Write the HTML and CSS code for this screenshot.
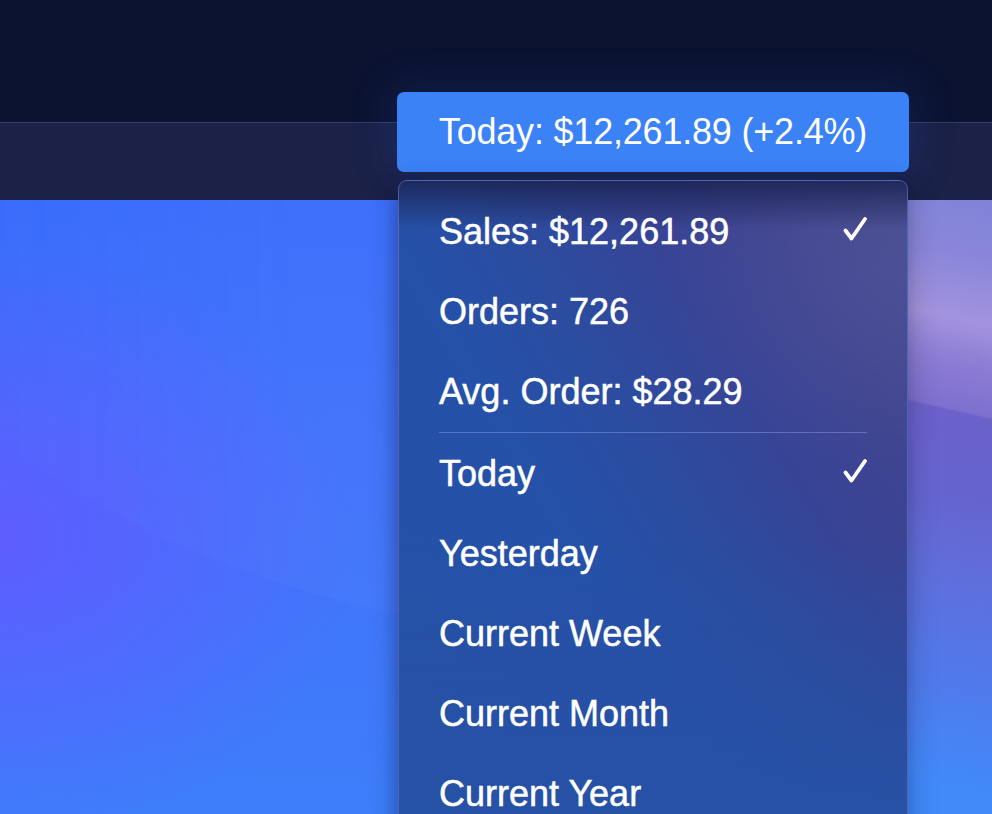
FILE: index.html
```html
<!DOCTYPE html>
<html lang="en">
	<head>
		<meta charset="utf-8">
		<title>Sales menu</title>
		<meta name="viewport" content="width=device-width">
		<link rel="stylesheet" href="styles.css">
	</head>
	<body>
		<div id="screen">
			<div class="topbar"></div>
			<div class="menubar"></div>
			<div class="desktop">
				<div class="wave"></div>
			</div>

			<!-- status item + dropdown -->
			<div class="status">
				<div class="status-button">Today: $12,261.89 (+2.4%)</div>
				<ul class="menu">
					<li class="item"><span>Sales: $12,261.89</span>
						<svg class="check" viewBox="0 0 24 24"><polyline points="2.5,13.5 8.5,21.5 22,2"/></svg>
					</li>
					<li class="item"><span>Orders: 726</span></li>
					<li class="item"><span>Avg. Order: $28.29</span></li>
					<li class="sep"></li>
					<li class="item"><span>Today</span>
						<svg class="check" viewBox="0 0 24 24"><polyline points="2.5,13.5 8.5,21.5 22,2"/></svg>
					</li>
					<li class="item"><span>Yesterday</span></li>
					<li class="item"><span>Current Week</span></li>
					<li class="item"><span>Current Month</span></li>
					<li class="item"><span>Current Year</span></li>
				</ul>
			</div>
		</div>
	</body>
</html>
```
FILE: styles.css
```css
* {
	margin: 0px;
	padding: 0px;
	box-sizing: border-box;
}

body {
	width: 992px;
	height: 814px;
	overflow: hidden;
	font-family: "Liberation Sans", Arial, sans-serif;
	background-color: rgb(12, 19, 49);
}

#screen {
	position: relative;
	width: 992px;
	height: 814px;
	display: flex;
	flex-direction: column;
	overflow: hidden;
}

.topbar {
	height: 122px;
	background-color: rgb(12, 19, 49);
}

.menubar {
	height: 78px;
	background-color: rgb(27, 33, 71);
	border-top: 1px solid rgb(53, 61, 98);
}

/* wallpaper: the right strip is mostly hidden by the menu, only x > 908 shows */
.desktop {
	flex: 1;
	position: relative;
	overflow: hidden;
	background:
		linear-gradient(193deg,
			rgb(129, 131, 216) 0px,
			rgb(138, 134, 218) 60px,
			rgb(163, 147, 222) 124px,
			rgb(139, 123, 211) 168px,
			rgb(126, 112, 207) 212px,
			rgb(107, 97, 203) 215px,
			rgb(102, 100, 207) 300px,
			rgb(94, 112, 222) 390px,
			rgb(80, 122, 236) 480px,
			rgb(66, 137, 250) 580px) right top / 130px 100% no-repeat,
		radial-gradient(ellipse 360px 300px at 0px 340px, rgba(96, 92, 255, 0.95), rgba(96, 92, 255, 0) 100%),
		linear-gradient(180deg, rgb(58, 108, 251) 0%, rgb(65, 114, 251) 45%, rgb(62, 126, 251) 100%);
}

/* faint light band in the wallpaper */
.wave {
	position: absolute;
	left: -200px;
	top: -672px;
	width: 1800px;
	height: 1120px;
	border-radius: 50%;
	background-color: rgba(130, 170, 255, 0.07);
	-webkit-mask-image: linear-gradient(90deg, transparent 8%, black 28%, black 50%, transparent 58%);
	mask-image: linear-gradient(90deg, transparent 8%, black 28%, black 50%, transparent 58%);
}

.status {
	position: absolute;
	left: 397px;
	top: 92px;
	width: 512px;
	display: flex;
	flex-direction: column;
	align-items: center;
	gap: 8px;
}

.status-button {
	width: 512px;
	height: 80px;
	line-height: 80px;
	text-align: center;
	background-color: rgb(59, 130, 246);
	color: rgb(255, 255, 255);
	font-size: 36px;
	letter-spacing: -0.2px;
	border-radius: 7px;
	box-shadow: 0 0 40px 8px rgba(40, 80, 200, 0.16);
}

.menu {
	list-style: none;
	width: 510px;
	height: 660px;
	padding-top: 11px;
	border: 1.5px solid rgba(110, 124, 200, 0.55);
	border-radius: 9px;
	box-shadow: 0 10px 30px rgba(0, 0, 0, 0.25), -4px 0 12px rgba(20, 40, 120, 0.2);
	background:
		linear-gradient(180deg, rgba(26, 34, 80, 0.85) 0px, rgba(26, 34, 80, 0) 48px),
		linear-gradient(0deg, rgba(38, 82, 166, 1) 0%, rgba(40, 80, 164, 0.6) 22%, rgba(40, 80, 164, 0) 45%),
		radial-gradient(ellipse 220px 200px at 95% 14%, rgba(90, 90, 160, 0.4), rgba(90, 90, 160, 0) 100%),
		linear-gradient(239deg,
			rgb(70, 76, 140) 0%,
			rgb(63, 68, 144) 18%,
			rgb(55, 68, 150) 32%,
			rgb(44, 76, 160) 46%,
			rgb(37, 81, 168) 60%,
			rgb(36, 83, 167) 100%);
}

.item {
	display: flex;
	justify-content: space-between;
	align-items: center;
	height: 80px;
	line-height: 80px;
	padding: 0 40px;
	font-size: 36px;
	color: rgb(255, 255, 255);
	-webkit-text-stroke: 0.5px rgb(255, 255, 255);
}

.check {
	width: 24px;
	height: 24px;
	margin-top: -6px;
	fill: none;
	stroke: rgb(255, 255, 255);
	stroke-width: 3.8;
	stroke-linecap: round;
	stroke-linejoin: round;
}

.sep {
	height: 2px;
	margin: 0 40px;
	border-top: 1px solid rgba(120, 140, 215, 0.6);
}
```
